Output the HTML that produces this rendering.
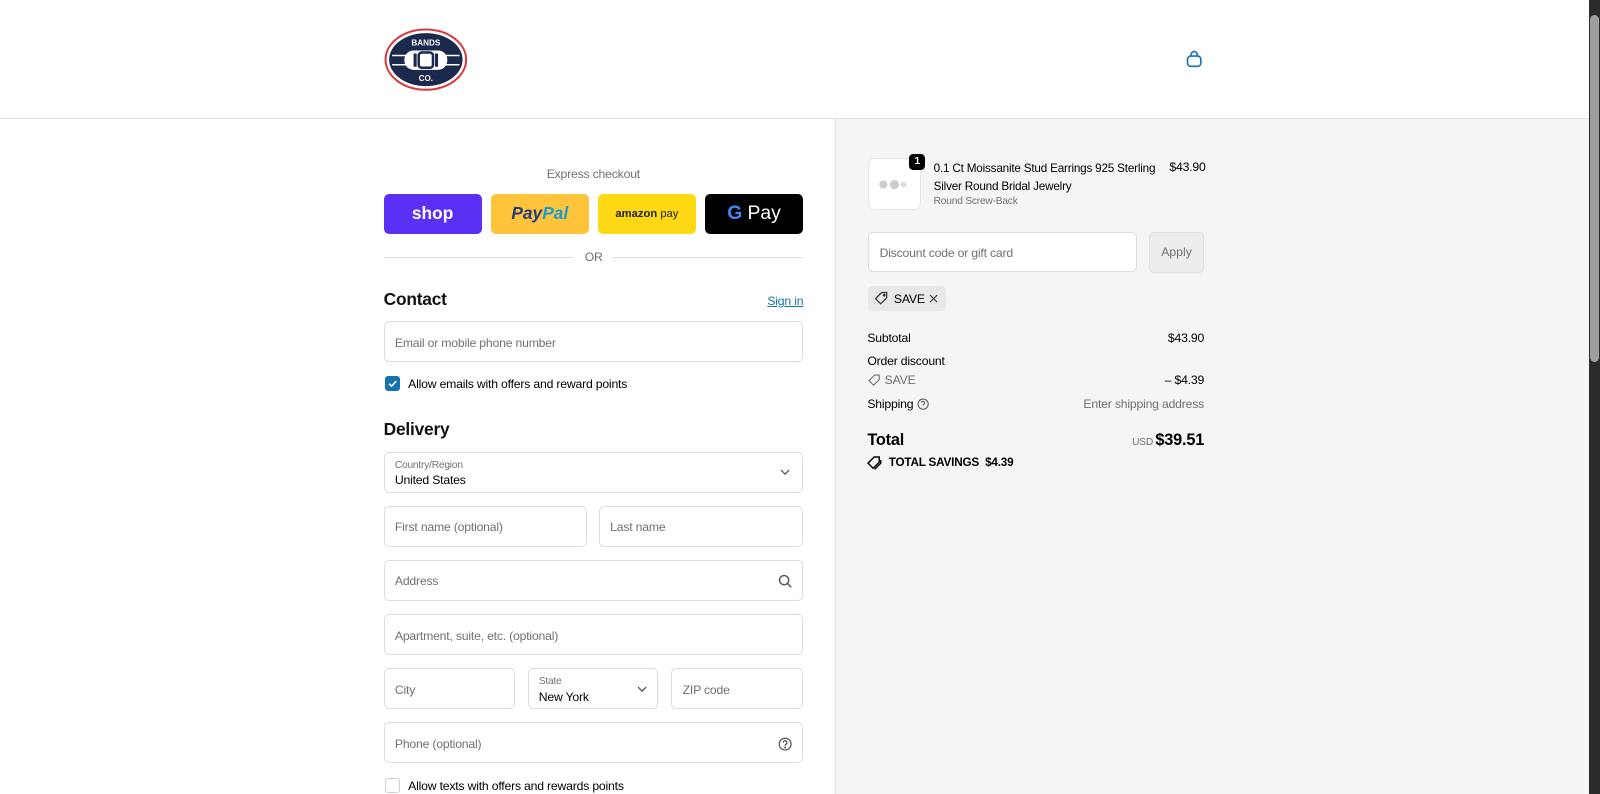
<!DOCTYPE html>
<html><head><meta charset="utf-8"><style>
*{box-sizing:border-box;margin:0;padding:0}
html,body{width:1600px;height:794px;overflow:hidden;background:#fff;font-family:"Liberation Sans",sans-serif;color:#000}
#w{zoom:1.0204;position:relative;width:1568px;height:778px;overflow:hidden}
.a{position:absolute}
.t{position:absolute;font-size:12px;line-height:14px;white-space:nowrap;letter-spacing:-0.2px}
.in{position:absolute;border:1px solid #dedede;border-radius:5px;background:#fff}
.ph{position:absolute;left:10px;top:13px;font-size:12px;color:#707070;letter-spacing:-0.2px;white-space:nowrap}
.btn{position:absolute;top:190px;width:96px;height:39px;border-radius:5px;display:flex;align-items:center;justify-content:center}
</style></head><body><div id="w">
<div class="a" style="left:0;top:116px;width:1557px;height:1px;background:#e1e1e1"></div>
<svg class="a" style="left:376px;top:27px" width="82" height="62" viewBox="0 0 82 62">
<ellipse cx="41" cy="31" rx="39.5" ry="29.5" fill="#fff" stroke="#d9383a" stroke-width="2"/>
<ellipse cx="41" cy="31" rx="36" ry="26" fill="#1b2a4c"/>
<text x="41" y="17" font-size="8" font-weight="bold" fill="#fff" text-anchor="middle" font-family="Liberation Sans">BANDS</text>
<text x="41" y="52" font-size="8" font-weight="bold" fill="#fff" text-anchor="middle" font-family="Liberation Sans">CO.</text>
<line x1="8" y1="27" x2="74" y2="27" stroke="#fff" stroke-width="1.5"/>
<line x1="8" y1="36" x2="74" y2="36" stroke="#fff" stroke-width="1.5"/>
<rect x="20" y="22" width="42" height="19" rx="9" fill="#fff"/>
<rect x="29" y="25" width="3" height="13" fill="#1b2a4c"/><rect x="50" y="25" width="3" height="13" fill="#1b2a4c"/>
<rect x="34" y="24" width="14" height="15" rx="3" fill="none" stroke="#1b2a4c" stroke-width="2.5"/>
</svg>
<svg class="a" style="left:1161px;top:49px" width="18" height="18" viewBox="0 0 18 18" fill="none" stroke="#1773b0" stroke-width="1.6"><path d="M6 6V4.5a3 3 0 0 1 6 0V6"/><rect x="2.5" y="6" width="13" height="10" rx="3"/></svg>
<div class="a" style="left:818px;top:117px;width:739px;height:661px;background:#f5f5f5;border-left:1px solid #e1e1e1"></div>
<div class="a" style="left:1557px;top:0;width:11px;height:778px;background:#2b2b2b"></div>
<div class="a" style="left:1558px;top:15px;width:9px;height:340px;background:#9e9e9e;border-radius:5px"></div>
<div class="t" style="left:376px;width:411px;text-align:center;top:164px;color:#707070">Express checkout</div>
<div class="btn" style="left:376px;background:#5a31f4;color:#fff;font-weight:bold;font-size:17px">shop</div>
<div class="btn" style="left:481px;background:#ffc439;font-weight:bold;font-style:italic;font-size:17px"><span style="color:#253b80">Pay</span><span style="color:#179bd7">Pal</span></div>
<div class="btn" style="left:586px;background:#ffd814;font-size:11px;color:#222"><b>amazon</b>&nbsp;pay</div>
<div class="btn" style="left:691px;background:#000;color:#fff;font-size:19px"><span style="font-weight:bold;color:#4285f4;margin-right:5px">G</span>Pay</div>
<div class="a" style="left:376px;top:252px;width:187px;height:1px;background:#dedede"></div>
<div class="a" style="left:600px;top:252px;width:187px;height:1px;background:#dedede"></div>
<div class="t" style="left:573px;top:245px;color:#707070">OR</div>
<div class="t" style="left:376px;top:283px;font-size:17px;line-height:20px;font-weight:bold;color:#111">Contact</div>
<div class="t" style="left:752px;top:288px;color:#1773b0;text-decoration:underline">Sign in</div>
<div class="in" style="left:376px;top:315px;width:411px;height:40px"><span class="ph">Email or mobile phone number</span></div>
<div class="a" style="left:377px;top:368px;width:15px;height:15px;background:#1773b0;border-radius:3px"><svg width="15" height="15" viewBox="0 0 15 15"><path d="M4 7.5l2.5 2.5 4.5-5" fill="none" stroke="#fff" stroke-width="1.5"/></svg></div>
<div class="t" style="left:400px;top:369px">Allow emails with offers and reward points</div>
<div class="t" style="left:376px;top:411px;font-size:17px;line-height:20px;font-weight:bold;color:#111">Delivery</div>
<div class="in" style="left:376px;top:443px;width:411px;height:40px"><span class="t" style="left:10px;top:6px;font-size:10px;color:#707070">Country/Region</span><span class="t" style="left:10px;top:20px">United States</span><svg class="a" style="right:12px;top:15px" width="10" height="8"><path d="M1 2l4 4 4-4" fill="none" stroke="#555" stroke-width="1.3"/></svg></div>
<div class="in" style="left:376px;top:496px;width:199px;height:40px"><span class="ph">First name (optional)</span></div>
<div class="in" style="left:587px;top:496px;width:200px;height:40px"><span class="ph">Last name</span></div>
<div class="in" style="left:376px;top:549px;width:411px;height:40px"><span class="ph">Address</span><svg class="a" style="right:10px;top:13px" width="14" height="14" fill="none" stroke="#555" stroke-width="1.4"><circle cx="6" cy="6" r="4.5"/><path d="M9.5 9.5l3.5 3.5"/></svg></div>
<div class="in" style="left:376px;top:602px;width:411px;height:40px"><span class="ph">Apartment, suite, etc. (optional)</span></div>
<div class="in" style="left:376px;top:655px;width:129px;height:40px"><span class="ph">City</span></div>
<div class="in" style="left:517px;top:655px;width:128px;height:40px"><span class="t" style="left:10px;top:6px;font-size:10px;color:#707070">State</span><span class="t" style="left:10px;top:20px">New York</span><svg class="a" style="right:10px;top:15px" width="10" height="8"><path d="M1 2l4 4 4-4" fill="none" stroke="#555" stroke-width="1.3"/></svg></div>
<div class="in" style="left:658px;top:655px;width:129px;height:40px"><span class="ph">ZIP code</span></div>
<div class="in" style="left:376px;top:708px;width:411px;height:40px"><span class="ph">Phone (optional)</span><svg class="a" style="right:10px;top:13px" width="14" height="14" fill="none" stroke="#555" stroke-width="1.2"><circle cx="7" cy="7" r="5.8"/><path d="M5.2 5.5a1.8 1.8 0 1 1 2.4 1.7c-.5.2-.6.5-.6 1v.5"/><circle cx="7" cy="10.3" r=".4" fill="#555"/></svg></div>
<div class="a" style="left:377px;top:762px;width:15px;height:15px;border:1px solid #cfcfcf;border-radius:3px;background:#fff"></div>
<div class="t" style="left:400px;top:763px">Allow texts with offers and rewards points</div>
<div class="a" style="left:851px;top:155px;width:52px;height:51px;background:#fff;border:1px solid #e6e6e6;border-radius:7px"><svg width="50" height="50"><circle cx="14" cy="25" r="4" fill="#ccc"/><circle cx="25" cy="25" r="4.5" fill="#ccc"/><circle cx="34" cy="25" r="3" fill="#ddd"/></svg></div>
<div class="a" style="left:891px;top:151px;width:16px;height:16px;background:#000;color:#fff;border-radius:4px;font-size:10px;font-weight:bold;text-align:center;line-height:16px">1</div>
<div class="t" style="left:915px;top:157px;line-height:17px;font-size:11.5px">0.1 Ct Moissanite Stud Earrings 925 Sterling<br>Silver Round Bridal Jewelry</div>
<div class="t" style="left:915px;top:191px;font-size:10px;color:#707070">Round Screw-Back</div>
<div class="t" style="left:1146px;top:157px">$43.90</div>
<div class="in" style="left:851px;top:227px;width:263px;height:40px"><span class="ph">Discount code or gift card</span></div>
<div class="a" style="left:1126px;top:227px;width:54px;height:41px;background:#ededed;border:1px solid #e0e0e0;border-radius:5px;color:#707070;font-size:12px;text-align:center;line-height:39px">Apply</div>
<div class="a" style="left:851px;top:280px;width:76px;height:25px;background:#e8e8e8;border-radius:5px"></div>
<svg class="a" style="left:857px;top:285px" width="14" height="14" fill="none" stroke="#333" stroke-width="1.2"><path d="M7.5 1.5h5v5l-6 6-5-5z"/><circle cx="10" cy="4" r=".8"/></svg>
<div class="t" style="left:876px;top:286px">SAVE</div>
<svg class="a" style="left:910px;top:288px" width="9" height="9" stroke="#444" stroke-width="1.2"><path d="M1 1l7 7M8 1l-7 7"/></svg>
<div class="t" style="left:850px;top:324px">Subtotal</div><div class="t" style="right:388px;top:324px">$43.90</div>
<div class="t" style="left:850px;top:347px">Order discount</div>
<svg class="a" style="left:851px;top:367px" width="12" height="12" fill="none" stroke="#707070" stroke-width="1.1"><path d="M6.5 1h4.5v4.5l-5.5 5.5-4.5-4.5z"/></svg>
<div class="t" style="left:867px;top:366px;color:#707070">SAVE</div><div class="t" style="right:388px;top:366px">– $4.39</div>
<div class="t" style="left:850px;top:389px">Shipping</div>
<svg class="a" style="left:899px;top:390px" width="12" height="12" fill="none" stroke="#555" stroke-width="1"><circle cx="6" cy="6" r="5"/><path d="M4.5 4.8a1.5 1.5 0 1 1 2 1.4c-.4.2-.5.4-.5.8v.3"/></svg>
<div class="t" style="right:388px;top:389px;color:#707070">Enter shipping address</div>
<div class="t" style="left:850px;top:422px;font-size:16px;line-height:19px;font-weight:bold">Total</div>
<div class="t" style="right:438px;top:427px;font-size:10px;color:#707070">USD</div>
<div class="t" style="right:388px;top:422px;font-size:16px;line-height:19px;font-weight:bold">$39.51</div>
<svg class="a" style="left:850px;top:447px" width="15" height="14" fill="none" stroke="#000" stroke-width="1.4"><path d="M7 1h5v5l-6 6-5-5z"/><path d="M13.5 4v3l-6 6"/></svg>
<div class="t" style="left:871px;top:447px;font-size:11.5px;font-weight:bold">TOTAL SAVINGS&nbsp; $4.39</div>
</div></body></html>
